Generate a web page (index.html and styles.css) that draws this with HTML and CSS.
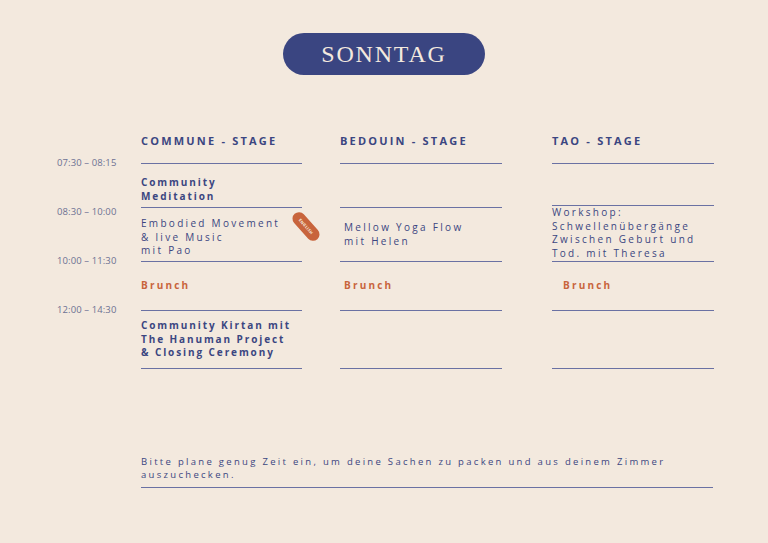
FILE: index.html
```html
<!DOCTYPE html>
<html lang="de">
<head>
<meta charset="utf-8">
<title>Sonntag</title>
<link rel="stylesheet" href="styles.css">
</head>
<body>
<div class="page">
  <div class="title-wrap"><div class="pill">SONNTAG</div></div>
  <div class="schedule">
    <div class="times">
      <div class="time t1">07:30 – 08:15</div>
      <div class="time t2">08:30 – 10:00</div>
      <div class="time t3">10:00 – 11:30</div>
      <div class="time t4">12:00 – 14:30</div>
    </div>
    <div class="col c1">
      <div class="head">COMMUNE - STAGE</div>
      <div class="cell a"><div class="bold">Community<br>Meditation</div></div>
      <div class="cell b"><div class="reg">Embodied Movement<br>&amp; live Music<br>mit Pao</div><span class="badge">ENGLISH</span></div>
      <div class="cell c"><div class="brunch">Brunch</div></div>
      <div class="cell d"><div class="bold">Community Kirtan mit<br>The Hanuman Project<br>&amp; Closing Ceremony</div></div>
    </div>
    <div class="col c2">
      <div class="head">BEDOUIN - STAGE</div>
      <div class="cell a"></div>
      <div class="cell b"><div class="reg">Mellow Yoga Flow<br>mit Helen</div></div>
      <div class="cell c"><div class="brunch">Brunch</div></div>
      <div class="cell d"></div>
    </div>
    <div class="col c3">
      <div class="head">TAO - STAGE</div>
      <div class="cell a"></div>
      <div class="cell b"><div class="reg">Workshop:<br>Schwellenübergänge<br>Zwischen Geburt und<br>Tod. mit Theresa</div></div>
      <div class="cell c"><div class="brunch">Brunch</div></div>
      <div class="cell d"></div>
    </div>
  </div>
  <div class="note">Bitte plane genug Zeit ein, um deine Sachen zu packen und aus deinem Zimmer auszuchecken.</div>
</div>
</body>
</html>
```
FILE: styles.css
```css
html, body {
  margin: 0;
  padding: 0;
  background: #f3e9de;
}
.page {
  width: 768px;
  height: 543px;
  overflow: hidden;
  font-family: "Open Sans", "DejaVu Sans", sans-serif;
  color: #3b4681;
}
.title-wrap {
  padding-top: 33px;
  display: flex;
  justify-content: center;
}
.pill {
  width: 202px;
  height: 42px;
  border-radius: 21px;
  background: #3a4581;
  color: #f3e9de;
  font-family: "Liberation Serif", serif;
  font-size: 24px;
  letter-spacing: 1.8px;
  line-height: 42px;
  text-align: center;
}
.schedule {
  display: flex;
  margin-top: 55px;
  padding-left: 57px;
}
.times {
  width: 84px;
  padding-top: 27px;
  display: flex;
  flex-direction: column;
  font-size: 9.5px;
  font-weight: 400;
  color: #6d7193;
}
.time { height: 12px; line-height: 12px; letter-spacing: 0.1px; }
.t2 { margin-top: 37px; }
.t3 { margin-top: 37px; }
.t4 { margin-top: 37px; }
.col { display: flex; flex-direction: column; }
.c1 { width: 161px; }
.c2 { width: 162px; margin-left: 38px; }
.c3 { width: 162px; margin-left: 50px; }
.head {
  height: 33px;
  line-height: 22px;
  border-bottom: 1px solid #6a71a3;
  font-size: 11px;
  font-weight: 700;
  letter-spacing: 2.2px;
}
.cell {
  border-bottom: 1px solid #6a71a3;
  box-sizing: border-box;
  position: relative;
}
.cell.a { height: 44px; padding-top: 11px; }
.cell.b { height: 54px; padding-top: 9px; }
.cell.c { height: 49px; padding-top: 16px; }
.cell.d { height: 58px; padding-top: 8px; }
.c3 .cell.a { height: 42px; }
.c3 .cell.b { height: 56px; padding-top: 0; }
.c2 .cell.b { padding-top: 13px; padding-left: 4px; }
.c2 .cell.c { padding-left: 4px; }
.c3 .cell.c { padding-left: 11px; }
.bold {
  font-size: 10px;
  font-weight: 700;
  letter-spacing: 1.9px;
  line-height: 13.5px;
}
.c1 .cell.a .bold { line-height: 14px; }
.reg {
  font-size: 10px;
  font-weight: 500;
  letter-spacing: 2.3px;
  line-height: 13.5px;
}
.brunch {
  font-size: 10px;
  font-weight: 700;
  letter-spacing: 2.2px;
  line-height: 14px;
  color: #c8643c;
}
.badge {
  position: absolute;
  left: 148px;
  top: 12px;
  width: 34px;
  height: 13px;
  border-radius: 7px;
  background: #c8643c;
  color: #f3e9de;
  font-size: 4px;
  font-weight: 700;
  line-height: 13px;
  text-align: center;
  letter-spacing: 0.3px;
  transform: rotate(48deg);
}
.note {
  margin: 86px 0 0 141px;
  width: 572px;
  padding-bottom: 6px;
  border-bottom: 1px solid #6a71a3;
  font-size: 9.5px;
  font-weight: 500;
  letter-spacing: 2.3px;
  line-height: 13px;
}
```
